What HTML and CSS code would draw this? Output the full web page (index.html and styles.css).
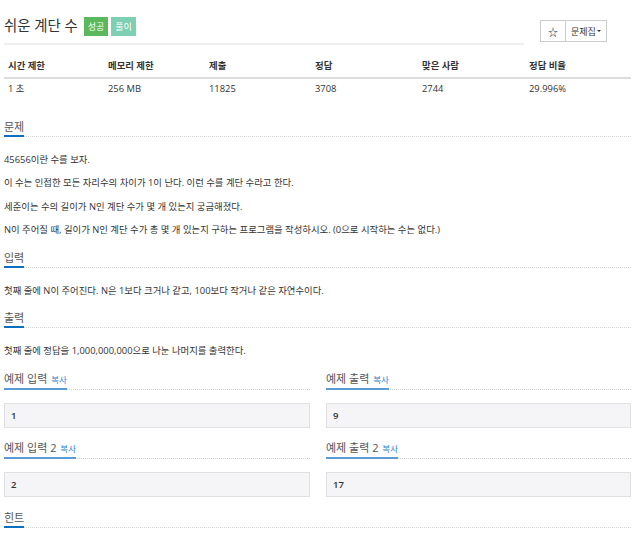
FILE: index.html
```html
<!DOCTYPE html>
<html lang="ko">
<head>
<meta charset="utf-8">
<title>쉬운 계단 수</title>
<link rel="stylesheet" href="styles.css">
</head>
<body>
<div class="page">
  <div class="header">
    <div class="title-box">
      <h1 class="title"><span class="title-text">쉬운 계단 수</span><span class="badge ok">성공</span><span class="badge sol">풀이</span></h1>
    </div>
    <div class="btn-group">
      <span class="btn star">☆</span><span class="btn menu">문제집 <span class="caret"></span></span>
    </div>
  </div>

  <table class="info">
    <colgroup>
      <col class="c1"><col class="c2"><col class="c3"><col class="c4"><col class="c5"><col class="c6">
    </colgroup>
    <thead>
      <tr><th>시간 제한</th><th>메모리 제한</th><th>제출</th><th>정답</th><th>맞은 사람</th><th>정답 비율</th></tr>
    </thead>
    <tbody>
      <tr><td>1 초</td><td>256 MB</td><td>11825</td><td>3708</td><td>2744</td><td>29.996%</td></tr>
    </tbody>
  </table>

  <section class="section">
    <div class="headline"><h2>문제</h2></div>
    <p>45656이란 수를 보자.</p>
    <p>이 수는 인접한 모든 자리수의 차이가 1이 난다. 이런 수를 계단 수라고 한다.</p>
    <p>세준이는 수의 길이가 N인 계단 수가 몇 개 있는지 궁금해졌다.</p>
    <p>N이 주어질 때, 길이가 N인 계단 수가 총 몇 개 있는지 구하는 프로그램을 작성하시오. (0으로 시작하는 수는 없다.)</p>
  </section>

  <section class="section">
    <div class="headline"><h2>입력</h2></div>
    <p>첫째 줄에 N이 주어진다. N은 1보다 크거나 같고, 100보다 작거나 같은 자연수이다.</p>
  </section>

  <section class="section">
    <div class="headline"><h2>출력</h2></div>
    <p>첫째 줄에 정답을 1,000,000,000으로 나눈 나머지를 출력한다.</p>
  </section>

  <div class="samples section">
    <div class="sample">
      <div class="headline sample-head"><h2>예제 입력 <a class="copy">복사</a></h2></div>
      <pre class="sample-data">1</pre>
    </div>
    <div class="sample">
      <div class="headline sample-head"><h2>예제 출력 <a class="copy">복사</a></h2></div>
      <pre class="sample-data">9</pre>
    </div>
  </div>

  <div class="samples section">
    <div class="sample">
      <div class="headline sample-head"><h2>예제 입력 2 <a class="copy">복사</a></h2></div>
      <pre class="sample-data">2</pre>
    </div>
    <div class="sample">
      <div class="headline sample-head"><h2>예제 출력 2 <a class="copy">복사</a></h2></div>
      <pre class="sample-data">17</pre>
    </div>
  </div>

  <section class="section">
    <div class="headline"><h2>힌트</h2></div>
  </section>
</div>
</body>
</html>
```

FILE: styles.css
```css
html, body {
  margin: 0;
  padding: 0;
  background: #fff;
}
body {
  font-family: "Open Sans", "Noto Sans CJK KR", sans-serif;
  font-size: 9.4px;
  color: #333;
}
.page {
  padding: 0 9px 0 4px;
}

/* header */
.header {
  display: flex;
  align-items: flex-start;
}
.title-box {
  width: 520px;
  padding: 15px 0 6px;
  border-bottom: 2px solid #eee;
}
.title {
  margin: 0;
  display: flex;
  align-items: center;
  font-size: 14.4px;
  font-weight: 400;
  line-height: 22px;
  color: #333;
}
.title-text {
  margin-right: 6px;
}
.badge {
  display: inline-block;
  height: 19px;
  line-height: 19px;
  padding: 0 4px;
  font-size: 9px;
  color: #fff;
  margin-right: 3px;
}
.badge.ok { background: #5cb85c; }
.badge.sol { background: #7dd0b4; }

.btn-group {
  display: flex;
  margin: 20px 0 0 16px;
}
.btn {
  display: inline-flex;
  align-items: center;
  height: 20px;
  border: 1px solid #ccc;
  background: #fff;
  padding: 0 5px;
  font-size: 9px;
  color: #333;
}
.btn + .btn { margin-left: -1px; }
.btn.star { padding: 0 7px; font-size: 10px; }
.caret {
  display: inline-block;
  width: 0;
  height: 0;
  margin-left: 1px;
  border-top: 2px solid #333;
  border-left: 2px solid transparent;
  border-right: 2px solid transparent;
}

/* info table */
.info {
  width: 627px;
  margin: 10px 0 17.5px;
  border-collapse: collapse;
  table-layout: fixed;
}
.c1 { width: 100px; }
.c2 { width: 101px; }
.c3 { width: 106px; }
.c4 { width: 107px; }
.c5 { width: 107px; }
.c6 { width: 106px; }
.info th {
  text-align: left;
  font-weight: 700;
  padding: 5px 4px;
  line-height: 12px;
  border-bottom: 2px solid #ddd;
}
.info td {
  padding: 4px 4px 6px;
  line-height: 12px;
}

/* sections */
.section {
  margin-top: 12.5px;
}
.headline {
  display: flex;
  border-bottom: 1px dotted #d3d3d3;
  margin-bottom: 16px;
}
.headline h2 {
  margin: 0 0 -1px;
  font-size: 11px;
  line-height: 16px;
  font-weight: 400;
  color: #555;
  border-bottom: 2px solid #0d6fbd;
}
.section p {
  margin: 0;
  line-height: 14px;
}
.section p + p {
  margin-top: 9.5px;
}

/* samples */
.samples {
  display: grid;
  grid-template-columns: 306px 305px;
  column-gap: 16px;
}
.sample-head {
  margin-bottom: 13px;
}
.sample-head h2 {
  border-bottom-color: #5b9bd5;
}
.copy {
  font-size: 8.5px;
  color: #2f82d0;
  margin-left: 1px;
}
.sample-data {
  margin: 0;
  height: 23px;
  line-height: 23px;
  padding: 0 6px;
  border: 1px solid #e0e0e0;
  background: #f5f5f7;
  font-family: "Open Sans", sans-serif;
  font-weight: 600;
  font-size: 9.5px;
  color: #333;
}
```
